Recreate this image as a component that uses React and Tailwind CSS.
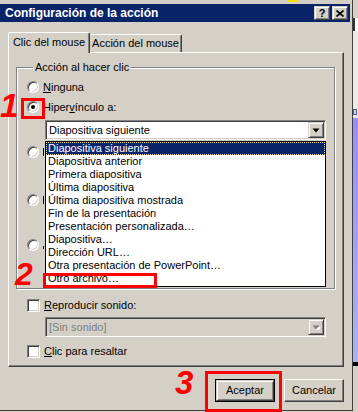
import React from 'react';

const raised = 'border border-t-[#d4d0c8] border-l-[#d4d0c8] border-r-[#404040] border-b-[#404040] shadow-[inset_1px_1px_0_#ffffff,inset_-1px_-1px_0_#808080]';
const sunken = 'border border-t-[#808080] border-l-[#808080] border-r-white border-b-white shadow-[inset_1px_1px_0_#404040,inset_-1px_-1px_0_#d4d0c8]';

const opciones = [
  'Diapositiva siguiente',
  'Diapositiva anterior',
  'Primera diapositiva',
  'Última diapositiva',
  'Última diapositiva mostrada',
  'Fin de la presentación',
  'Presentación personalizada…',
  'Diapositiva…',
  'Dirección URL…',
  'Otra presentación de PowerPoint…',
  'Otro archivo…',
];

function Radio({ checked }) {
  return (
    <span className={`w-[12px] h-[12px] rounded-full bg-white shrink-0 flex items-center justify-center ${sunken}`}>
      {checked && <span className="w-[4px] h-[4px] rounded-full bg-black" />}
    </span>
  );
}

function Check() {
  return <span className={`w-[13px] h-[13px] bg-white shrink-0 ${sunken}`} />;
}

function Combo({ text, disabled }) {
  return (
    <div className={`h-[20px] w-[281px] flex items-center ${sunken} ${disabled ? 'bg-[#d4d0c8]' : 'bg-white'}`}>
      <span className={`flex-1 pl-[3px] ${disabled ? 'text-[#808080]' : 'text-black'}`}>{text}</span>
      <span className={`w-[16px] h-[16px] mr-[1px] bg-[#d4d0c8] flex items-center justify-center ${raised}`}>
        <svg width="8" height="5" viewBox="0 0 8 5">
          {disabled && <path d="M2 2h7L5.5 6z" fill="#ffffff" />}
          <path d="M0.5 0.5h7L4 4.5z" fill={disabled ? '#808080' : '#000000'} />
        </svg>
      </span>
    </div>
  );
}

function Fila({ children, className = '' }) {
  return <div className={`h-[20px] flex items-center gap-[4px] ${className}`}>{children}</div>;
}

// solo asoma el borde izquierdo de la primera letra, el resto queda bajo la lista
function Asoma({ alto = 'h-[8px]' }) {
  return <span className={`w-[1px] ${alto} bg-black`} />;
}

export default function App() {
  return (
    <div className="relative w-[358px] h-[412px] overflow-hidden flex bg-[#d4d0c8] text-black text-[11px] leading-[13px] font-['Liberation_Sans',Arial,sans-serif]">
      {/* ventana de diálogo */}
      <div className="w-[353px] h-[411px] flex flex-col border-r border-b border-[#404040]">
        <div className="h-[4px] flex">
          <div className="w-[287px]" />
          <div className="w-[10px] h-[2px] bg-[#f8e000]" />
        </div>

        <div className="h-[18px] mr-[2px] bg-[#0a246a] flex items-center justify-between">
          <span className="pl-[5px] text-white font-bold text-[12px]">Configuración de la acción</span>
          <div className="flex gap-[2px] pr-[2px]">
            <span className={`w-[16px] h-[14px] bg-[#d4d0c8] flex items-center justify-center font-bold text-[11px] leading-none ${raised}`}>?</span>
            <span className={`w-[16px] h-[14px] bg-[#d4d0c8] flex items-center justify-center ${raised}`}>
              <svg width="8" height="7" viewBox="0 0 8 7">
                <path d="M0.5 0.5l7 6M7.5 0.5l-7 6" stroke="#000" strokeWidth="1.6" />
              </svg>
            </span>
          </div>
        </div>

        {/* pestañas */}
        <div className="mt-[11px] h-[20px] pl-[8px] flex items-end relative z-10 -mb-px">
          <div className="w-[82px] h-[21px] bg-[#d4d0c8] rounded-t-[2px] border-t border-l border-t-white border-l-white border-r border-r-[#404040] shadow-[inset_-1px_0_0_#808080] flex items-center justify-center pb-[1px]">
            Clic del mouse
          </div>
          <div className="w-[92px] h-[18px] mb-px bg-[#d4d0c8] rounded-t-[2px] border-t border-t-white border-r border-r-[#404040] shadow-[inset_-1px_0_0_#808080] flex items-center justify-center">
            Acción del mouse
          </div>
        </div>

        <div className="ml-[8px] w-[336px] h-[315px] flex flex-col border border-t-white border-l-white border-r-[#404040] border-b-[#404040] shadow-[inset_-1px_-1px_0_#808080]">
          <fieldset className="mt-[8px] ml-[7px] w-[319px] h-[228px] border border-[#808080] shadow-[1px_1px_0_#ffffff,inset_1px_1px_0_#ffffff] pl-[10px]">
            <legend className="ml-[6px] px-[2px] bg-[#d4d0c8]">Acción al hacer clic</legend>
            <Fila className="mt-[3px]">
              <Radio />
              <span><u>N</u>inguna</span>
            </Fila>
            <Fila>
              <Radio checked />
              <span>Hiper<u>v</u>ínculo a:</span>
            </Fila>
            <div className="mt-[3px] ml-[18px]">
              <Combo text="Diapositiva siguiente" />
            </div>
            <Fila className="mt-[2px]">
              <Radio />
              <Asoma />
            </Fila>
            <div className="h-[28px]" />
            <Fila>
              <Radio />
              <Asoma />
            </Fila>
            <div className="h-[25px]" />
            <Fila>
              <Radio />
              <Asoma alto="h-[3px] mt-[5px]" />
            </Fila>
          </fieldset>

          <Fila className="mt-[6px] pl-[18px] gap-[3px]">
            <Check />
            <span><u>R</u>eproducir sonido:</span>
          </Fila>
          <div className="mt-[2px] ml-[36px]">
            <Combo text="[Sin sonido]" disabled />
          </div>
          <Fila className="mt-[4px] pl-[18px] gap-[3px]">
            <Check />
            <span><u>C</u>lic para resaltar</span>
          </Fila>
        </div>

        <div className="mt-[12px] ml-[8px] w-[336px] flex justify-end gap-[9px]">
          <div className="w-[60px] h-[23px] border border-black">
            <div className={`w-full h-full bg-[#d4d0c8] flex items-center justify-center ${raised}`}>Aceptar</div>
          </div>
          <div className="w-[60px] h-[23px] bg-[#d4d0c8] flex items-center justify-center border border-t-white border-l-white border-r-[#404040] border-b-[#404040] shadow-[inset_-1px_-1px_0_#808080]">
            Cancelar
          </div>
        </div>
      </div>

      {/* lo que asoma detrás de la ventana */}
      <div className="flex-1 flex flex-col">
        <div className="h-[18px]" />
        <div className="h-[13px] bg-white border-l-2 border-[#333]" />
        <div className="h-[74px] bg-[#ecebe6]" />
        <div className="h-[13px] bg-[#ecebe6] flex items-center">
          <span className="w-[4px] h-[6px] border border-[#4060a0] bg-[#c8d8f0]" />
        </div>
        <div className="h-[244px] bg-linear-to-b from-[#9c8cff] to-[#a6b4f2]" />
        <div className="h-[4px] bg-black" />
        <div className="flex-1" />
      </div>

      {/* lista desplegada */}
      <div className="absolute left-[45px] top-[141px] w-[281px] h-[146px] bg-white border border-black">
        {opciones.map((o, i) => (
          <div
            key={o}
            className={`h-[13px] pl-[2px] whitespace-nowrap ${i === 0 ? 'bg-[#0a246a] text-white outline-1 outline-dotted outline-[#f0e090] -outline-offset-1' : ''}`}
          >
            {o}
          </div>
        ))}
      </div>

      {/* anotaciones en rojo */}
      <div className="absolute left-[21px] top-[98px] w-[24px] h-[21px] border-[3px] border-[#ff0000]" />
      <div className="absolute left-[43px] top-[273px] w-[114px] h-[15px] border-[3px] border-[#ff0000]" />
      <div className="absolute left-[205px] top-[371px] w-[77px] h-[41px] border-[3px] border-[#ff0000]" />
      <span className="absolute left-[0px] top-[89px] text-[33px] leading-[33px] font-bold italic text-[#ff0000]">1</span>
      <span className="absolute left-[15px] top-[258px] text-[32px] leading-[32px] font-bold italic text-[#ff0000]">2</span>
      <span className="absolute left-[175px] top-[366px] text-[33px] leading-[33px] font-bold italic text-[#ff0000]">3</span>
    </div>
  );
}
